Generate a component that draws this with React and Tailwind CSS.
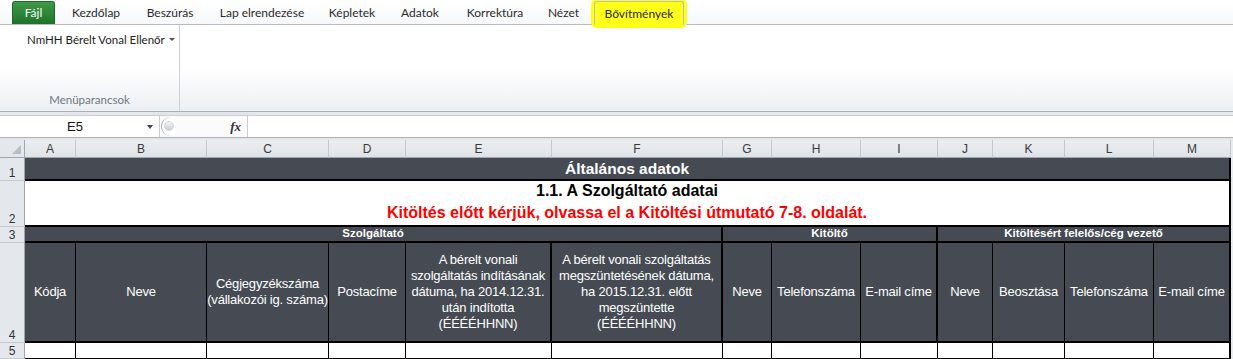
import React from "react"

const cols = [
  { l: "A", w: 51 },
  { l: "B", w: 131 },
  { l: "C", w: 122 },
  { l: "D", w: 77 },
  { l: "E", w: 146 },
  { l: "F", w: 171 },
  { l: "G", w: 49 },
  { l: "H", w: 89 },
  { l: "I", w: 77 },
  { l: "J", w: 55 },
  { l: "K", w: 72 },
  { l: "L", w: 89 },
  { l: "M", w: 77 },
]

const tabs = [
  { t: "Kezdőlap", w: 82 },
  { t: "Beszúrás", w: 66 },
  { t: "Lap elrendezése", w: 118 },
  { t: "Képletek", w: 62 },
  { t: "Adatok", w: 74 },
  { t: "Korrektúra", w: 76 },
  { t: "Nézet", w: 61 },
]

const heads = [
  { t: ["Kódja"], b: "border-r" },
  { t: ["Neve"], b: "border-r" },
  { t: ["Cégjegyzékszáma", "(vállakozói ig. száma)"], b: "border-r" },
  { t: ["Postacíme"], b: "border-r" },
  { t: ["A bérelt vonali", "szolgáltatás indításának", "dátuma, ha 2014.12.31.", "után indította", "(ÉÉÉÉHHNN)"], b: "border-r-2" },
  { t: ["A bérelt vonali szolgáltatás", "megszüntetésének dátuma,", "ha 2015.12.31. előtt", "megszüntette", "(ÉÉÉÉHHNN)"], b: "border-r-2" },
  { t: ["Neve"], b: "border-r" },
  { t: ["Telefonszáma"], b: "border-r" },
  { t: ["E-mail címe"], b: "border-r-2" },
  { t: ["Neve"], b: "border-r" },
  { t: ["Beosztása"], b: "border-r" },
  { t: ["Telefonszáma"], b: "border-r" },
  { t: ["E-mail címe"], b: "border-r-2" },
]

function RowHead({ n }) {
  return (
    <div className="flex items-end justify-center bg-[#e4e7eb] border-r border-r-[#9ea6b0] border-b border-b-[#c3c8ce] text-[12px] leading-[14px] text-[#333]">
      {n}
    </div>
  )
}

export default function App() {
  return (
    <div className="w-[1233px] h-[359px] overflow-hidden bg-[#e9ecef] font-['Liberation_Sans',Arial,sans-serif]">
      {/* tab bar */}
      <div className="h-[25px] flex items-end pl-[12px] bg-gradient-to-b from-white to-[#f6f8fa] border-b border-[#b6bcc4] font-['Lato',sans-serif] text-[12px] text-[#2b2b2b]">
        <div className="w-[43px] h-[23px] rounded-t-[3px] bg-gradient-to-b from-[#3f9a47] to-[#1d7429] text-white flex items-center justify-center border border-[#1b6a27] border-b-0">
          Fájl
        </div>
        {tabs.map((t) => (
          <div key={t.t} style={{ width: t.w }} className="h-[23px] flex items-center justify-center">
            {t.t}
          </div>
        ))}
        <div className="relative w-[90px] h-[24px] -mb-[1px]">
          <div className="absolute -left-[3px] -right-[3px] -top-[2px] bottom-[-3px] bg-[#ffff1a] rounded-[6px]" />
          <div className="absolute inset-0 border border-[#b9bfc7] border-b-0 rounded-t-[3px] flex items-center justify-center">
            Bővítmények
          </div>
        </div>
      </div>

      {/* ribbon */}
      <div className="h-[87px] flex bg-gradient-to-b from-white via-white to-[#eceff3] border-b border-[#aab1ba] font-['Lato',sans-serif]">
        <div className="w-[180px] flex flex-col border-r border-[#cdd2d8] pt-[6px]">
          <div className="flex items-center pl-[27px] text-[11.5px] text-[#222] gap-[4px]">
            NmHH Bérelt Vonal Ellenőr
            <span className="inline-block w-0 h-0 border-l-[3px] border-r-[3px] border-t-[3px] border-l-transparent border-r-transparent border-t-[#555]" />
          </div>
          <div className="mt-auto mb-[3px] text-center text-[11.5px] text-[#6f7782]">Menüparancsok</div>
        </div>
        <div className="flex-1" />
      </div>

      {/* formula bar */}
      <div className="h-[3px] bg-[#e3e7ec]" />
      <div className="h-[23px] flex bg-white border-y border-[#aab1ba] border-t-[#c9ced5]">
        <div className="w-[160px] flex items-center border-r border-[#c9ced5] relative">
          <div className="w-[150px] text-center text-[13px] text-[#111]">E5</div>
          <span className="absolute left-[147px] top-[9px] w-0 h-0 border-l-[3px] border-r-[3px] border-t-[4px] border-l-transparent border-r-transparent border-t-[#444]" />
        </div>
        <div className="w-[88px] flex items-center relative border-r border-[#c9ced5] bg-[#fbfbfc]">
          <div className="absolute left-[1px] top-[1px] w-[14px] h-[19px] rounded-l-full border-l border-[#a4abb4] bg-white" />
          <div className="absolute left-[4px] top-[5px] w-[10px] h-[10px] rounded-full bg-gradient-to-b from-[#f4f5f7] to-[#c8ccd2] border border-[#d1d5da]" />
          <span className="ml-auto mr-[6px] text-[13px] italic font-bold font-['Liberation_Serif',serif] text-[#333]">fx</span>
        </div>
        <div className="flex-1" />
      </div>
      <div className="h-[2px] bg-[#e3e7ec]" />

      {/* sheet */}
      <div className="grid w-[1231px] grid-cols-[25px_51px_131px_122px_77px_146px_171px_49px_89px_77px_55px_72px_89px_77px] grid-rows-[18px_23px_46px_16px_100px_16px] bg-white">
        {/* column headers */}
        <div className="relative bg-[#e4e7eb] border-r border-b border-[#9ea6b0]">
          <svg className="absolute right-[3px] bottom-[3px]" width="9" height="9"><path d="M9 0 L9 9 L0 9 Z" fill="#b7bdc4" /></svg>
        </div>
        {cols.map((c) => (
          <div key={c.l} className="flex items-center justify-center bg-gradient-to-b from-[#eceef1] to-[#dfe3e7] border-r border-r-[#c3c8ce] border-b border-b-[#9ea6b0] text-[12px] text-[#3a3a3a]">
            {c.l}
          </div>
        ))}

        {/* row 1 */}
        <RowHead n="1" />
        <div className="col-span-13 bg-[#464b53] border-b-2 border-r-2 border-black flex items-center justify-center text-white font-bold text-[15.5px]">
          Általános adatok
        </div>

        {/* row 2 */}
        <RowHead n="2" />
        <div className="col-span-13 bg-white border-b-2 border-r-2 border-black flex flex-col items-center font-bold text-[16px] leading-[22px]">
          <div className="text-black mt-[-1px]">1.1. A Szolgáltató adatai</div>
          <div className="text-[#ff0000]">Kitöltés előtt kérjük, olvassa el a Kitöltési útmutató 7-8. oldalát.</div>
        </div>

        {/* row 3 */}
        <RowHead n="3" />
        <div className="col-span-6 bg-[#464b53] border-b-2 border-r-2 border-black flex items-center justify-center text-white font-bold text-[11.5px]">
          Szolgáltató
        </div>
        <div className="col-span-3 bg-[#464b53] border-b-2 border-r-2 border-black flex items-center justify-center text-white font-bold text-[11.5px]">
          Kitöltő
        </div>
        <div className="col-span-4 bg-[#464b53] border-b-2 border-r-2 border-black flex items-center justify-center text-white font-bold text-[11.5px]">
          Kitöltésért felelős/cég vezető
        </div>

        {/* row 4 */}
        <RowHead n="4" />
        {heads.map((h, i) => (
          <div key={i} className={`bg-[#464b53] border-b-2 ${h.b} border-black flex flex-col items-center justify-center text-center text-white text-[13px] leading-[16px] tracking-[-0.2px]`}>
            {h.t.map((line) => (
              <div key={line} className="whitespace-nowrap">{line}</div>
            ))}
          </div>
        ))}

        {/* row 5 */}
        <RowHead n="5" />
        {heads.map((h, i) => (
          <div key={i} className={`bg-white border-b ${i === 12 ? "border-r-2" : "border-r"} border-black`} />
        ))}
      </div>
    </div>
  )
}
